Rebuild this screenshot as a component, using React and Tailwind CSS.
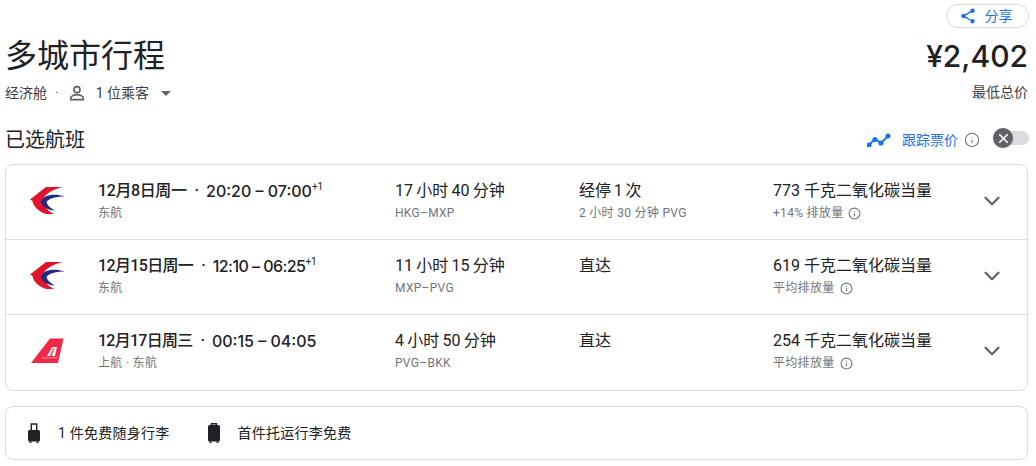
import React from 'react';
import { ChevronDown, X, Info } from 'lucide-react';

const flights = [
    { logo: 'eastern', date: '12月8日周一', dateClass: 'tracking-[-0.4px]', times: '20:20 – 07:00', timesClass: '', plus: '+1', airline: '东航', duration: '17 小时 40 分钟', route: 'HKG–MXP', stops: '经停 1 次', stopInfo: '2 小时 30 分钟 PVG', co2: '773 千克二氧化碳当量', co2Note: '+14% 排放量' },
    { logo: 'eastern', date: '12月15日周一', dateClass: 'tracking-[-0.65px]', times: '12:10 – 06:25', timesClass: 'tracking-[-0.55px]', plus: '+1', airline: '东航', duration: '11 小时 15 分钟', route: 'MXP–PVG', stops: '直达', co2: '619 千克二氧化碳当量', co2Note: '平均排放量' },
    { logo: 'shanghai', date: '12月17日周三', dateClass: 'tracking-[-0.75px]', times: '00:15 – 04:05', timesClass: '', airline: '上航 · 东航', duration: '4 小时 50 分钟', route: 'PVG–BKK', stops: '直达', co2: '254 千克二氧化碳当量', co2Note: '平均排放量' },
]

function EasternLogo() {
    return (
        <svg width="36" height="27" viewBox="0 0 36 27">
            <path d="M0 12.5 L16 0 L33 0 C24 2 15 6 12.5 13.5 C13 19 18 24 24 27 L16 27 C9 25 3 19 2.5 14 Z" fill="#e2142d" />
            <path d="M11 15 C13 8 23 6 35 9.5 C27 9.5 19 11 16.5 15 C17 18 20 21 25 23.5 C18 23 12 20 11 15Z" fill="#1f2a80" />
        </svg>
    )
}

function ShanghaiLogo() {
    return (
        <svg width="36" height="26" viewBox="0 0 36 26" className="mt-[1px]">
            <path d="M1 25 L20 0.5 L33.5 0.5 L28 25Z" fill="#ee2a48" />
            <path d="M17 18 L22 9 L27 9 L25 18Z" fill="#fff" opacity="0.9" />
            <path d="M20 18 L23.5 10 L24.3 10 L21.5 18Z" fill="#ee2a48" />
            <path d="M12 19.5 L27.5 19.5 L27.3 20.3 L11.5 20.3Z" fill="#fff" opacity="0.6" />
        </svg>
    )
}

function FlightRow({ flight, last }) {
    return (
        <div className={`flex h-[75px] ${last ? '' : 'border-b border-[#dadce0]'}`}>
            <div className="w-[92px] shrink-0 pl-[24px] pt-[22px]">
                {flight.logo === 'eastern' ? <EasternLogo /> : <ShanghaiLogo />}
            </div>
            <div className="w-[297px] shrink-0 pt-[15px]">
                <div className="flex items-start text-[16px] leading-[22px] font-medium text-[#202124] whitespace-nowrap">
                    <span className={flight.dateClass}>{flight.date}</span>
                    <span className="ml-[8px] mr-[7px]">·</span>
                    <span className={`font-['Inter'] text-[16px] ${flight.timesClass}`}>{flight.times}</span>
                    {flight.plus && <span className="text-[10px] font-normal leading-[14px]">{flight.plus}</span>}
                </div>
                <div className="text-[12px] leading-[16px] mt-[3px] text-[#70757a] tracking-[0.3px]">{flight.airline}</div>
            </div>
            <div className="w-[184px] shrink-0 pt-[15px]">
                <div className="text-[16px] leading-[22px] text-[#202124] whitespace-nowrap [word-spacing:-0.7px]">{flight.duration}</div>
                <div className="text-[12px] leading-[16px] mt-[3px] text-[#70757a] tracking-[0.3px]">{flight.route}</div>
            </div>
            <div className="w-[194px] shrink-0 pt-[15px]">
                <div className="text-[16px] leading-[22px] text-[#202124] whitespace-nowrap [word-spacing:-1.2px]">{flight.stops}</div>
                {flight.stopInfo && <div className="text-[12px] leading-[16px] mt-[3px] text-[#70757a] tracking-[0.3px]">{flight.stopInfo}</div>}
            </div>
            <div className="w-[205px] shrink-0 pt-[15px]">
                <div className="text-[16px] leading-[22px] text-[#202124] whitespace-nowrap">{flight.co2}</div>
                <div className="flex items-center gap-[5px] text-[12px] leading-[16px] mt-[3px] text-[#70757a] tracking-[0.3px]">
                    {flight.co2Note}
                    <Info size={13} strokeWidth={2} />
                </div>
            </div>
            <div className="flex-1 pt-[23px] pl-[1px]">
                <ChevronDown size={26} strokeWidth={2} className="text-[#5f6368]" />
            </div>
        </div>
    )
}

function Suitcase({ small }) {
    return (
        <svg width="16" height="20" viewBox="0 0 16 20" className="shrink-0">
            {small
                ? <path d="M5.3 8V1h5.4v7" fill="none" stroke="#202124" strokeWidth="1.4" />
                : <path d="M5.5 2V.7h5V2" fill="none" stroke="#202124" strokeWidth="1.4" />}
            <rect x="2" y={small ? 7 : 2} width="12" height={small ? 11.5 : 16.5} rx="1.5" fill="#202124" />
            <rect x="3.5" y="18.5" width="2" height="1.5" fill="#202124" />
            <rect x="10.5" y="18.5" width="2" height="1.5" fill="#202124" />
        </svg>
    )
}

export default function App() {
    return (
        <div className="w-[1036px] h-[466px] overflow-hidden bg-white pl-[5px] pr-[8px] pt-[4px] text-[#202124] [font-family:Roboto,'Noto_Sans_CJK_SC',sans-serif]">
            {/* Share button */}
            <div className="flex justify-end -mr-[1px]">
                <button className="h-[24px] w-[83px] flex items-center justify-center gap-[8px] pr-[4px] rounded-full border border-[#dadce0] text-[14px] text-[#1a73e8]">
                    <svg width="18" height="18" viewBox="0 0 24 24" fill="#1a73e8">
                        <path d="M18 16.08c-.76 0-1.44.3-1.96.77L8.91 12.7c.05-.23.09-.46.09-.7s-.04-.47-.09-.7l7.05-4.11c.54.5 1.25.81 2.04.81 1.66 0 3-1.34 3-3s-1.34-3-3-3-3 1.34-3 3c0 .24.04.47.09.7L8.04 9.81C7.5 9.31 6.79 9 6 9c-1.66 0-3 1.34-3 3s1.34 3 3 3c.79 0 1.5-.31 2.04-.81l7.12 4.16c-.05.21-.08.43-.08.65 0 1.61 1.31 2.92 2.92 2.92s2.92-1.31 2.92-2.92-1.31-2.92-2.92-2.92z" />
                    </svg>
                    分享
                </button>
            </div>

            {/* Title and price */}
            <div className="flex justify-between mt-[6px]">
                <div>
                    <h1 className="text-[32px] leading-[44px] text-[#202124]">多城市行程</h1>
                    <div className="flex items-center text-[14px] leading-[18px] mt-[5px] text-[#3c4043]">
                        <span>经济舱</span>
                        <span className="ml-[8px] text-[#70757a]">·</span>
                        <svg width="20" height="20" viewBox="0 0 24 24" fill="none" stroke="#5f6368" strokeWidth="2" className="ml-[8px]">
                            <circle cx="12" cy="8" r="3.6" />
                            <path d="M4.5 20v-2c0-2.6 5-4 7.5-4s7.5 1.4 7.5 4v2z" />
                        </svg>
                        <span className="ml-[9px]">1 位乘客</span>
                        <svg width="10" height="5" viewBox="0 0 10 5" className="ml-[12px]">
                            <path d="M0 0h10L5 5z" fill="#5f6368" />
                        </svg>
                    </div>
                </div>
                <div className="text-right">
                    <div className="font-['Inter'] text-[30px] leading-[44px] font-medium text-[#202124]">¥2,402</div>
                    <div className="text-[14px] leading-[18px] mt-[5px] text-[#3c4043]">最低总价</div>
                </div>
            </div>

            {/* Selected flights header */}
            <div className="flex justify-between items-center mt-[24px] h-[26px]">
                <h2 className="text-[20px] leading-[26px] text-[#202124]">已选航班</h2>
                <div className="flex items-center">
                    <svg width="24" height="14" viewBox="0 0 24 14" fill="none" stroke="#1a73e8" strokeWidth="1.8">
                        <path d="M2 12 L8 6 L14 10 L21 3" />
                        <circle cx="2" cy="12" r="1.7" fill="#1a73e8" />
                        <circle cx="8" cy="6.5" r="1.7" fill="#1a73e8" />
                        <circle cx="14" cy="10" r="1.7" fill="#1a73e8" />
                        <circle cx="21" cy="3" r="1.7" fill="#1a73e8" />
                    </svg>
                    <span className="ml-[11px] text-[14px] text-[#1a73e8]">跟踪票价</span>
                    <Info size={16} strokeWidth={1.6} className="ml-[6px] text-[#70757a]" />
                    {/* Toggle */}
                    <div className="relative ml-[13px] -mr-[1px] w-[36px] h-[14px] rounded-full bg-[#dadce0] mb-[4px]">
                        <div className="absolute left-0 -top-[3px] w-[20px] h-[20px] rounded-full bg-[#5f6368] shadow flex items-center justify-center">
                            <X size={15} strokeWidth={2.5} className="text-white" />
                        </div>
                    </div>
                </div>
            </div>

            {/* Flights list */}
            <div className="mt-[11px] rounded-[8px] border border-[#dadce0]">
                {flights.map((flight, i) => (
                    <FlightRow key={flight.route} flight={flight} last={i === flights.length - 1} />
                ))}
            </div>

            {/* Baggage */}
            <div className="mt-[15px] h-[54px] rounded-[8px] border border-[#dadce0] flex items-center pl-[20px] text-[14px] tracking-[0.25px] text-[#202124]">
                <Suitcase small />
                <span className="ml-[16px]">1 件免费随身行李</span>
                <div className="ml-[36px]"><Suitcase /></div>
                <span className="ml-[16px]">首件托运行李免费</span>
            </div>
        </div>
    )
}
